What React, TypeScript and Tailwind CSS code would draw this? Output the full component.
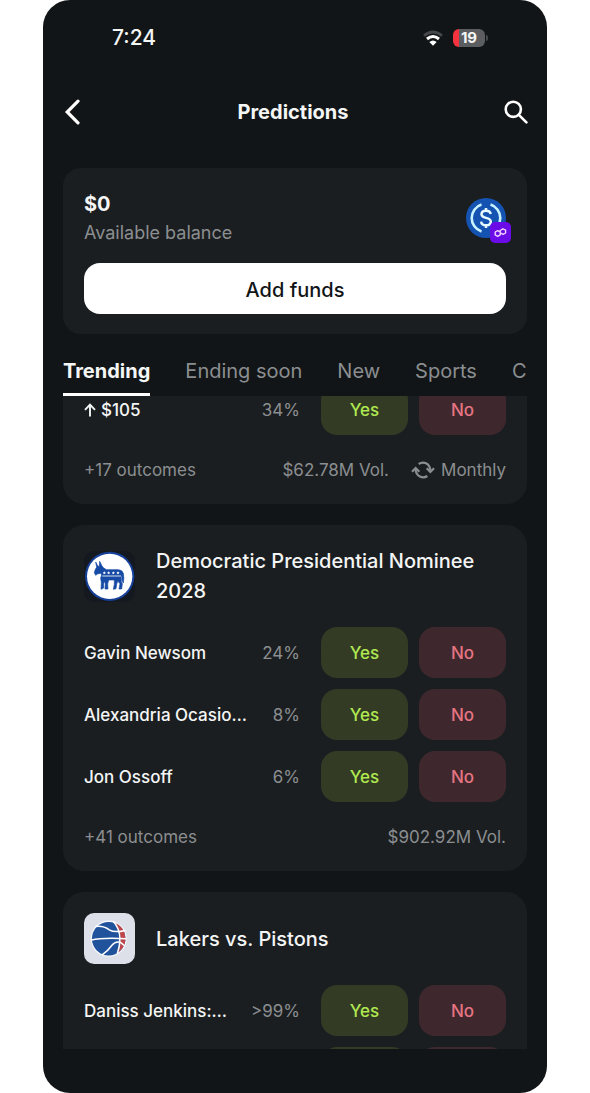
import { useState } from "react";

type Outcome = { name: string; chance: string; up?: boolean };

function StatusBar() {
  return (
    <div className="flex h-[75px] shrink-0 items-center justify-between pl-[69px] pr-[59px]">
      <span className="text-[21px] leading-7 font-medium">7:24</span>
      <div className="flex items-center gap-[10px]">
        <svg className="h-4 w-5" viewBox="0 0 60 48" fill="none" aria-hidden="true">
          <path d="M3 17 Q30 -5 57 17" stroke="#45484a" strokeWidth="8" />
          <path d="M12 27 Q30 12 48 27" stroke="#fff" strokeWidth="9" />
          <path d="M19 36 Q30 27 41 36 L30 47 Z" fill="#fff" />
        </svg>
        <div className="flex items-center gap-px">
          <div className="flex h-[18px] w-8 items-center justify-center rounded-md bg-linear-to-r from-[#f5333f] from-20% to-[#5b5d60] to-20% text-[15px] leading-none font-bold">
            19
          </div>
          <div className="h-[6px] w-[2px] rounded-r-full bg-[#45484a]" />
        </div>
      </div>
    </div>
  );
}

function Header() {
  return (
    <header className="flex h-[73px] shrink-0 items-center justify-between pr-[19px] pl-[21px]">
      <button type="button" aria-label="Back">
        <svg className="h-[26px] w-[18px]" viewBox="0 0 18 26" fill="none" stroke="#fff" strokeWidth="3.2" aria-hidden="true">
          <path d="M14 2.2 L3.2 13 L14 23.8" strokeLinecap="round" strokeLinejoin="miter" />
        </svg>
      </button>
      <h1 className="text-[20px] leading-7 font-bold">Predictions</h1>
      <button type="button" aria-label="Search">
        <svg className="h-6 w-6" viewBox="0 0 24 24" fill="none" stroke="#fff" strokeWidth="2.6" aria-hidden="true">
          <circle cx="9.3" cy="9.3" r="7.6" />
          <path d="M14.8 14.8 L22.4 22.4" strokeLinecap="round" />
        </svg>
      </button>
    </header>
  );
}

function UsdcLogo() {
  return (
    <div className="relative h-10 w-10">
      <svg className="h-10 w-10" viewBox="0 0 40 40" fill="none" aria-hidden="true">
        <circle cx="20" cy="20" r="20" fill="#1553b3" />
        <path d="M15.5 6.5 A14.2 14.2 0 0 0 15.5 33.5" stroke="#c9f2ff" strokeWidth="2.6" />
        <path d="M24.5 6.5 A14.2 14.2 0 0 1 24.5 33.5" stroke="#c9f2ff" strokeWidth="2.6" />
        <path
          d="M24.7 16 C24.3 13.7 22.5 12.8 20 12.8 C17.3 12.8 15.5 14 15.5 16.3 C15.5 21.4 24.8 18.3 24.8 23.7 C24.8 26 22.8 27.3 20 27.3 C17.2 27.3 15.4 26 15.1 23.6 M20 10 V13 M20 27 V30"
          stroke="#e8fbff"
          strokeWidth="2.5"
        />
      </svg>
      <div className="absolute -right-[5px] -bottom-[5px] flex h-[21px] w-[21px] items-center justify-center rounded-[5px] bg-[#6a0be8]">
        <svg className="h-[13px] w-[13px]" viewBox="0 0 13 13" fill="none" stroke="#f0d0ff" strokeWidth="1.4" strokeLinejoin="round" aria-hidden="true">
          <path d="M6.2 5.9 L3.7 4.6 L1.2 6 V8.9 L3.7 10.3 L6.2 8.9 V4.5 L8.9 2.8 L11.6 4.2 V7 L9.1 8.4 L6.9 7.2" />
        </svg>
      </div>
    </div>
  );
}

function BalanceCard() {
  return (
    <section className="mx-5 mt-5 shrink-0 rounded-[18px] bg-[#1b1e20] px-[21px] pt-[21px] pb-5">
      <div className="flex items-center justify-between">
        <div>
          <p className="text-[20px] leading-[30px] font-bold">$0</p>
          <p className="text-[18px] leading-7 text-[#8b8e90]">Available balance</p>
        </div>
        <UsdcLogo />
      </div>
      <button type="button" className="mt-4 h-[51px] w-full rounded-[16px] bg-white pt-0.5 text-[20px] font-medium text-[#121517]">
        Add funds
      </button>
    </section>
  );
}

const TABS = ["Trending", "Ending soon", "New", "Sports", "Crypto"];

function Tabs() {
  const [active, setActive] = useState("Trending");
  return (
    <nav className="mx-5 flex shrink-0 gap-[35px] overflow-hidden pt-[22px] text-[20px] leading-[30px]">
      {TABS.map((tab) => (
        <button
          key={tab}
          type="button"
          onClick={() => setActive(tab)}
          className={
            tab === active
              ? "shrink-0 border-b-[3px] border-white pb-[7px] font-bold"
              : "shrink-0 border-b-[3px] border-transparent pb-[7px] text-[#8b8e90]"
          }
        >
          {tab}
        </button>
      ))}
    </nav>
  );
}

function UpArrow() {
  return (
    <svg className="mr-[5px] h-[14px] w-3 shrink-0" viewBox="0 0 12 14" fill="none" stroke="currentColor" strokeWidth="1.9" aria-hidden="true">
      <path d="M6 13.5 V1.8 M1 6.8 L6 1.6 L11 6.8" />
    </svg>
  );
}

function OutcomeRow({ outcome }: { outcome: Outcome }) {
  return (
    <li className="flex h-[51px] items-center">
      <span className="flex min-w-0 flex-1 items-center text-[17px] leading-6 font-medium">
        {outcome.up && <UpArrow />}
        <span className="truncate">{outcome.name}</span>
      </span>
      <span className="ml-4 text-[17px] leading-6 text-[#8b8e90]">{outcome.chance}</span>
      <button type="button" className="ml-[21px] h-full w-[87px] shrink-0 rounded-[16px] bg-[#333b25] pt-0.5 text-[17px] font-medium text-[#b0e850]">
        Yes
      </button>
      <button type="button" className="ml-[11px] h-full w-[87px] shrink-0 rounded-[16px] bg-[#3f282d] pt-0.5 text-[17px] font-medium text-[#e57482]">
        No
      </button>
    </li>
  );
}

function RepeatIcon() {
  return (
    <svg className="h-[18px] w-6" viewBox="0 0 72 54" fill="none" stroke="currentColor" strokeWidth="6.5" aria-hidden="true">
      <path d="M23 9 C36 0 57 6 58 29" />
      <path d="M49 45 C36 54 14 47 14 25" />
      <path d="M47 22 L58 33 L69 22" />
      <path d="M3 32 L14 21 L25 32" />
    </svg>
  );
}

function DonkeyLogo() {
  return (
    <svg className="h-[51px] w-[51px] shrink-0 rounded-[10px] bg-[#14191f]" viewBox="72 93 153 153" aria-hidden="true">
      <circle cx="149" cy="169" r="74" fill="#164099" />
      <circle cx="149" cy="169" r="68" fill="#fff" />
      <path
        d="M107 126 L114 139 L118 139 L119 124 L126 138 Q131 147 140 149 L174 149 Q187 149 190 160 Q193 174 190 189 L186 181 L185 165 L183 171 L184 186 L187 191 L185 207 L177 207 L180 191 L173 183 L170 193 L168 206 L160 208 L163 193 L163 180 L146 180 L143 192 L144 207 L135 207 L136 191 L133 183 L131 193 L131 204 L123 208 L124 188 L122 174 L125 165 L122 160 L112 162 L107 166 L103 158 L106 148 L110 142 Z"
        fill="#164aa5"
        stroke="#164aa5"
        strokeWidth="2"
        strokeLinejoin="round"
      />
      <path d="M127 168 H183" stroke="#fff" strokeWidth="2.5" />
      <g fill="#fff">
        <path d="M133 154 l1.4 3 3.4.3-2.6 2.2.8 3.4-3-1.8-3 1.8.8-3.4-2.6-2.2 3.4-.3z" />
        <path d="M146 154 l1.4 3 3.4.3-2.6 2.2.8 3.4-3-1.8-3 1.8.8-3.4-2.6-2.2 3.4-.3z" />
        <path d="M160 154 l1.4 3 3.4.3-2.6 2.2.8 3.4-3-1.8-3 1.8.8-3.4-2.6-2.2 3.4-.3z" />
        <path d="M174 154 l1.4 3 3.4.3-2.6 2.2.8 3.4-3-1.8-3 1.8.8-3.4-2.6-2.2 3.4-.3z" />
      </g>
    </svg>
  );
}

function BasketballLogo() {
  return (
    <svg className="h-[51px] w-[51px] shrink-0 rounded-[10px] bg-[#dddfe9]" viewBox="72 66 155 155" fill="none" aria-hidden="true">
      <circle cx="147" cy="144" r="55" fill="#f4f6fb" />
      <circle cx="147" cy="144" r="51" fill="#20539c" />
      <path d="M164 96 A51 51 0 0 1 177 185 Q184 166 183 143 Q181 116 164 96 Z" fill="#c0484c" />
      <g stroke="#fff" strokeWidth="4.5">
        <path d="M161 92 Q180 112 181 143 Q181 170 173 190" />
        <path d="M107 107 Q131 104 149 117 Q164 127 198 119" />
        <path d="M95 148 Q126 140 200 144" />
        <path d="M127 193 Q146 180 157 164 Q167 151 182 155 L196 166" />
      </g>
    </svg>
  );
}

function MarketCard({
  title,
  logo,
  outcomes,
  more,
  volume,
  period,
}: {
  title?: string;
  logo?: React.ReactNode;
  outcomes: Outcome[];
  more: string;
  volume: string;
  period?: string;
}) {
  return (
    <article className="rounded-[21px] bg-[#1b1e20] p-[21px]">
      {title && (
        <div className="mb-[21px] flex items-center gap-[21px]">
          {logo}
          <h2 className="text-[20px] leading-[30px] font-medium">{title}</h2>
        </div>
      )}
      <ul className="flex flex-col gap-[11px]">
        {outcomes.map((o) => (
          <OutcomeRow key={o.name} outcome={o} />
        ))}
      </ul>
      <div className="mt-[22px] flex items-center text-[17px] leading-[26px] text-[#8b8e90]">
        <span className="flex-1">{more}</span>
        <span>{volume}</span>
        {period && (
          <span className="ml-[22px] flex items-center gap-[6px]">
            <RepeatIcon />
            {period}
          </span>
        )}
      </div>
    </article>
  );
}

export default function App() {
  return (
    <div className="h-screen bg-white px-[43px] font-['Inter',sans-serif] text-[#f4f5f5]">
      <main className="flex h-full flex-col overflow-hidden rounded-[27px] bg-[#121517]">
        <StatusBar />
        <Header />
        <BalanceCard />
        <Tabs />
        <div className="mx-5 mb-11 min-h-0 flex-1 overflow-hidden">
          <div className="-mt-[33px] flex flex-col gap-[21px]">
            <MarketCard
              outcomes={[{ name: "$105", chance: "34%", up: true }]}
              more="+17 outcomes"
              volume="$62.78M Vol."
              period="Monthly"
            />
            <MarketCard
              title="Democratic Presidential Nominee 2028"
              logo={<DonkeyLogo />}
              outcomes={[
                { name: "Gavin Newsom", chance: "24%" },
                { name: "Alexandria Ocasio…", chance: "8%" },
                { name: "Jon Ossoff", chance: "6%" },
              ]}
              more="+41 outcomes"
              volume="$902.92M Vol."
            />
            <MarketCard
              title="Lakers vs. Pistons"
              logo={<BasketballLogo />}
              outcomes={[
                { name: "Daniss Jenkins:…", chance: ">99%" },
                { name: "", chance: "" },
              ]}
              more=""
              volume=""
            />
          </div>
        </div>
      </main>
    </div>
  );
}
